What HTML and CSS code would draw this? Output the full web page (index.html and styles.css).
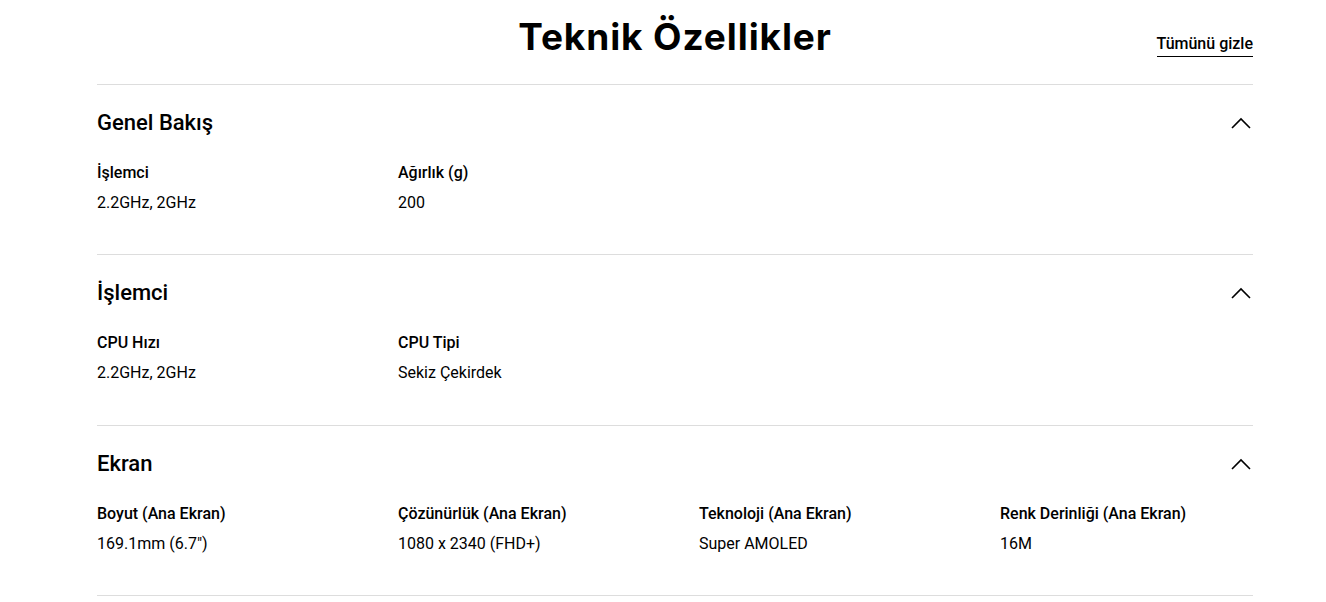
FILE: index.html
```html
<!DOCTYPE html>
<html lang="tr">
<head>
<meta charset="utf-8">
<title>Teknik Özellikler</title>
<link rel="stylesheet" href="styles.css">
</head>
<body>
<div class="specs">
  <header class="specs-header">
    <span></span>
    <h1 class="specs-title">Teknik Özellikler</h1>
    <a class="toggle-all" href="#">Tümünü gizle</a>
  </header>

  <section class="spec-group">
    <div class="group-head">
      <h2 class="group-title">Genel Bakış</h2>
      <svg class="chevron" width="20" height="12" viewBox="0 0 20 12"><path d="M1 11 L10 2 L19 11" fill="none" stroke="#000" stroke-width="1.6"/></svg>
    </div>
    <div class="spec-grid">
      <div class="spec"><div class="spec-label">İşlemci</div><div class="spec-value">2.2GHz, 2GHz</div></div>
      <div class="spec"><div class="spec-label">Ağırlık (g)</div><div class="spec-value">200</div></div>
    </div>
  </section>

  <section class="spec-group">
    <div class="group-head">
      <h2 class="group-title">İşlemci</h2>
      <svg class="chevron" width="20" height="12" viewBox="0 0 20 12"><path d="M1 11 L10 2 L19 11" fill="none" stroke="#000" stroke-width="1.6"/></svg>
    </div>
    <div class="spec-grid">
      <div class="spec"><div class="spec-label">CPU Hızı</div><div class="spec-value">2.2GHz, 2GHz</div></div>
      <div class="spec"><div class="spec-label">CPU Tipi</div><div class="spec-value">Sekiz Çekirdek</div></div>
    </div>
  </section>

  <section class="spec-group">
    <div class="group-head">
      <h2 class="group-title">Ekran</h2>
      <svg class="chevron" width="20" height="12" viewBox="0 0 20 12"><path d="M1 11 L10 2 L19 11" fill="none" stroke="#000" stroke-width="1.6"/></svg>
    </div>
    <div class="spec-grid">
      <div class="spec"><div class="spec-label">Boyut (Ana Ekran)</div><div class="spec-value">169.1mm (6.7")</div></div>
      <div class="spec"><div class="spec-label">Çözünürlük (Ana Ekran)</div><div class="spec-value">1080 x 2340 (FHD+)</div></div>
      <div class="spec"><div class="spec-label">Teknoloji (Ana Ekran)</div><div class="spec-value">Super AMOLED</div></div>
      <div class="spec"><div class="spec-label">Renk Derinliği (Ana Ekran)</div><div class="spec-value">16M</div></div>
    </div>
  </section>
</div>
</body>
</html>
```

FILE: styles.css
```css
* { box-sizing: border-box; }
html, body { margin: 0; padding: 0; background: #fff; }
body {
  font-family: "Roboto", "Noto Sans", sans-serif;
  color: #000;
}
.specs {
  width: 1156px;
  margin-left: 97px;
}
.specs-header {
  display: grid;
  grid-template-columns: 1fr auto 1fr;
  height: 85px;
  border-bottom: 1px solid #ddd;
}
.specs-title {
  margin: 0;
  padding-top: 11px;
  font-family: "Inter", sans-serif;
  font-weight: 700;
  font-size: 37px;
  line-height: 52px;
  letter-spacing: 0.9px;
}
.toggle-all {
  justify-self: end;
  align-self: start;
  margin-top: 34px;
  font-size: 16px;
  font-weight: 500;
  line-height: 20px;
  color: #000;
  text-decoration: none;
  border-bottom: 1px solid #000;
  padding-bottom: 2px;
}
.spec-group {
  height: 170.4px;
  border-bottom: 1px solid #ddd;
  padding-top: 25px;
}
.group-head {
  display: flex;
  justify-content: space-between;
  align-items: center;
  height: 26px;
}
.group-title {
  margin: 0;
  font-size: 22px;
  font-weight: 500;
  line-height: 26px;
}
.chevron { margin-right: 2px; }
.spec-grid {
  display: grid;
  grid-template-columns: repeat(4, 301px);
  margin-top: 26px;
}
.spec-label {
  font-size: 16px;
  font-weight: 500;
  line-height: 22px;
}
.spec-value {
  margin-top: 8px;
  font-size: 16px;
  font-weight: 400;
  line-height: 22px;
}
```
